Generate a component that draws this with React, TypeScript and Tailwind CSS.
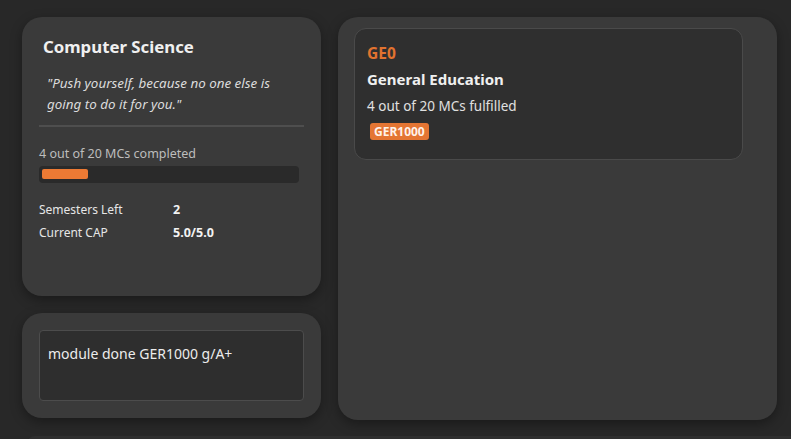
import React from "react";

export default function App() {
  return (
    <div
      className="w-[791px] h-[439px] overflow-hidden bg-[#282828] text-[#e8e8e8] relative"
      style={{ fontFamily: '"Noto Sans", "Open Sans", sans-serif' }}
    >
      <div className="flex gap-[17px] pl-[22px] pt-[17px]">
        <div className="flex flex-col gap-[17px] w-[299px]">
          <div className="h-[279px] rounded-[20px] bg-[#3a3a3a] shadow-[0_4px_12px_rgba(0,0,0,0.35)] px-[17px] pt-[19px]">
            <div className="px-[4px] text-[16.8px] font-bold text-[#f0f0f0] leading-[22px]">Computer Science</div>
            <div className="mt-[15px] ml-[8px] w-[252px] text-[13.4px] italic text-[#dcdcdc] leading-[21px]">
              "Push yourself, because no one else is going to do it for you."
            </div>
            <div className="mt-[10px] h-[2px] bg-[#4e4e4e]" />
            <div className="mt-[18px] text-[12.5px] text-[#bdbdbd] leading-[17px]">4 out of 20 MCs completed</div>
            <div className="mt-[4px] w-[260px] h-[17px] rounded-[4px] bg-[#2a2a2a] p-[3px]">
              <div className="w-[46px] h-[10px] rounded-[2px] bg-[#ec7a34]" />
            </div>
            <div className="mt-[18px] grid grid-cols-[134px_1fr] gap-y-[6px] text-[12px] leading-[17px]">
              <div className="text-[#e6e6e6]">Semesters Left</div>
              <div className="font-bold text-[#f2f2f2] text-[12.5px]">2</div>
              <div className="text-[#e6e6e6]">Current CAP</div>
              <div className="font-bold text-[#f2f2f2] text-[12.5px]">5.0/5.0</div>
            </div>
          </div>
          <div className="h-[105px] rounded-[20px] bg-[#3a3a3a] shadow-[0_4px_12px_rgba(0,0,0,0.35)] p-[17px]">
            <div className="h-[71px] w-[265px] rounded-[4px] border border-[#4c4c4c] bg-[#2e2e2e] px-[8px] pt-[13px] text-[14px] text-[#ececec] leading-[20px]">
              module done GER1000 g/A+
            </div>
          </div>
        </div>
        <div className="w-[439px] h-[403px] rounded-[20px] bg-[#3a3a3a] shadow-[0_4px_12px_rgba(0,0,0,0.35)] pl-[16px] pt-[11px]">
          <div className="w-[389px] h-[132px] rounded-[12px] border border-[#4a4a4a] bg-[#2f2f2f] px-[12px] pt-[13px]">
            <div className="text-[15.5px] font-bold text-[#e2732f] leading-[22px]">GE0</div>
            <div className="mt-[5px] text-[15px] font-bold text-[#f0f0f0] leading-[20px]">General Education</div>
            <div className="mt-[8px] text-[13.5px] text-[#e0e0e0] leading-[18px]">4 out of 20 MCs fulfilled</div>
            <div className="mt-[8px] ml-[3px] inline-flex h-[17px] items-center rounded-[3px] bg-[#e47533] px-[4px] text-[12px] font-bold text-[#fff2ea] leading-[17px]">
              GER1000
            </div>
          </div>
        </div>
      </div>
      <div className="absolute left-[27px] right-0 top-[436px] h-[10px] rounded-tl-[8px] bg-[#2f2f2f]" />
    </div>
  );
}
